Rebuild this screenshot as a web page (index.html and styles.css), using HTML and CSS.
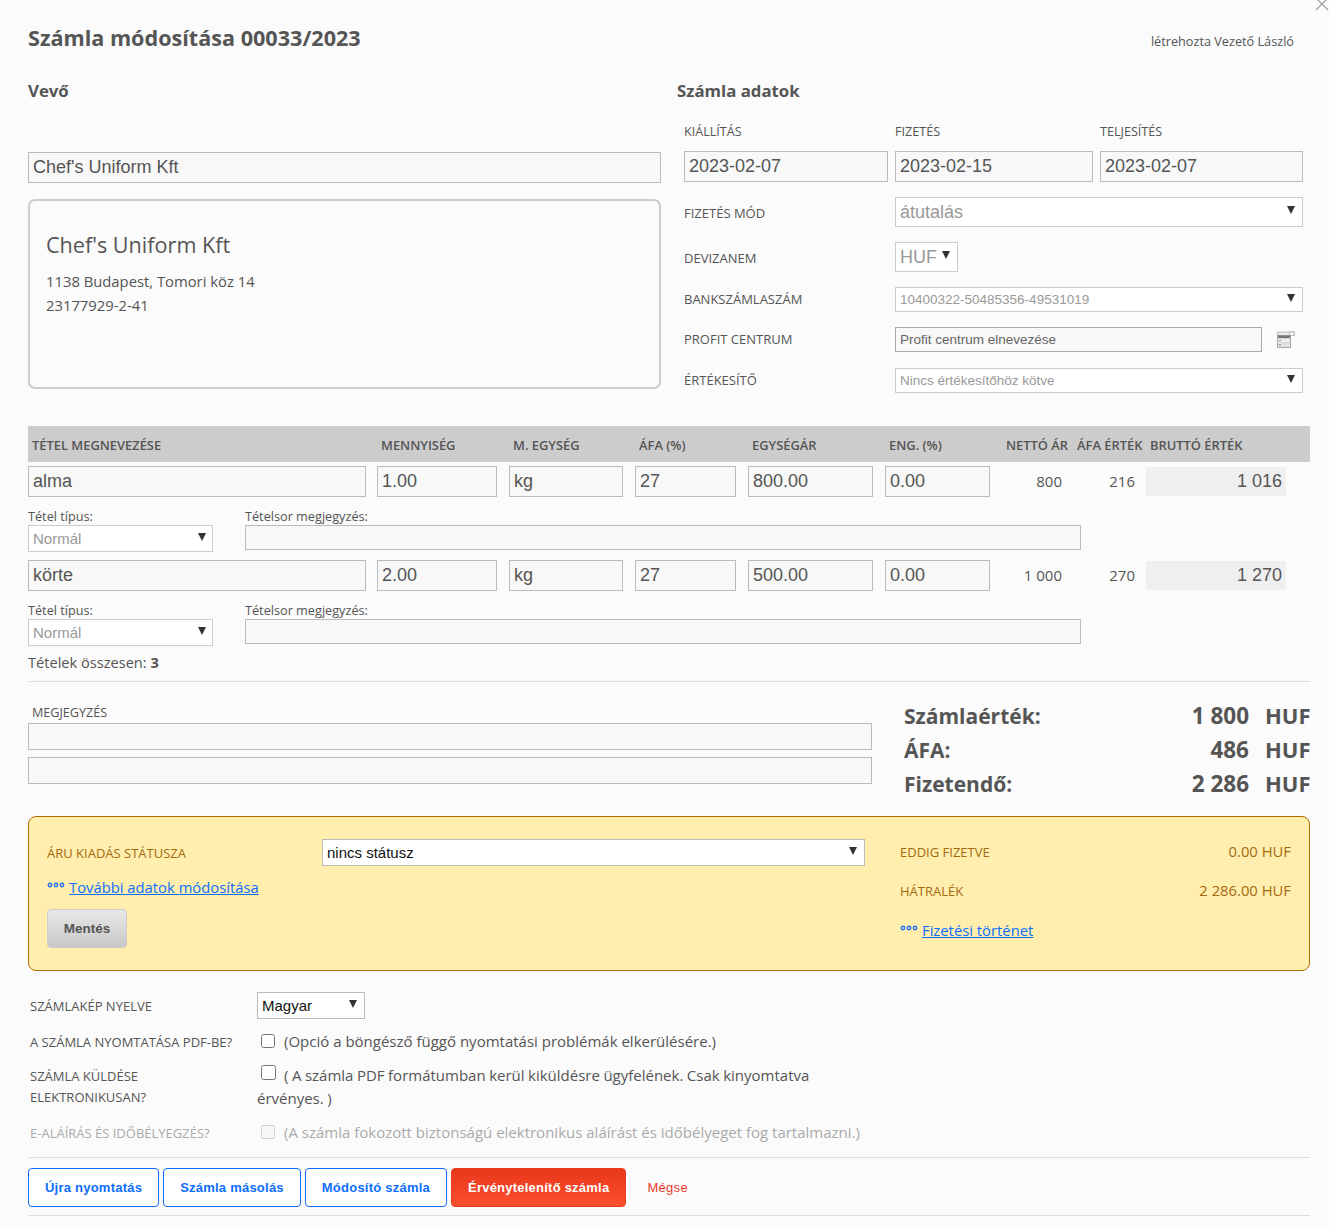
FILE: index.html
```html
<!DOCTYPE html>
<html lang="hu">
<head>
<meta charset="utf-8">
<title>Számla módosítása</title>
<link rel="stylesheet" href="styles.css">
</head>
<body>
<svg class="close" width="14" height="12" viewBox="0 0 14 12"><path d="M1 -2L13 10M13 -2L1 10" stroke="#9a9a9a" stroke-width="1.1" fill="none"/></svg>
<main class="page">
  <header class="head">
    <h1>Számla módosítása 00033/2023</h1>
    <span class="author">létrehozta Vezető László</span>
  </header>

  <section class="top">
    <div class="buyer">
      <h2>Vevő</h2>
      <input class="field name-input" readonly value="Chef's Uniform Kft">
      <div class="card">
        <div class="card-title">Chef's Uniform Kft</div>
        <div class="card-line">1138 Budapest, Tomori köz 14</div>
        <div class="card-line">23177929-2-41</div>
      </div>
    </div>
    <div class="details">
      <h2>Számla adatok</h2>
      <div class="dates">
        <label class="lbl date-lbl">KIÁLLÍTÁS</label><label class="lbl date-lbl">FIZETÉS</label><label class="lbl date-lbl">TELJESÍTÉS</label>
        <input class="field d1" readonly value="2023-02-07"><input class="field d2" readonly value="2023-02-15"><input class="field d3" readonly value="2023-02-07">
      </div>
      <div class="form-row r1"><label class="lbl">FIZETÉS MÓD</label><div class="sel big wide"><select disabled><option>átutalás</option></select></div></div>
      <div class="form-row r1"><label class="lbl">DEVIZANEM</label><div class="sel big cur"><select disabled><option>HUF</option></select></div></div>
      <div class="form-row r2"><label class="lbl">BANKSZÁMLASZÁM</label><div class="sel small wide"><select disabled><option>10400322-50485356-49531019</option></select></div></div>
      <div class="form-row r2"><label class="lbl">PROFIT CENTRUM</label><input class="field profit" readonly value="Profit centrum elnevezése">
        <svg class="pc-icon" width="18" height="18" viewBox="0 0 18 18"><rect x="0.5" y="1" width="17" height="3.5" fill="#e8e8e8" stroke="#bdbdbd"/><rect x="13" y="1" width="4" height="3.5" fill="#fff" stroke="#bdbdbd"/><rect x="0.5" y="4.5" width="13" height="12" fill="#d6d6d6" stroke="#aaa"/><rect x="1" y="4.5" width="12" height="2.5" fill="#777"/><rect x="1" y="8" width="12" height="3" fill="#eee"/><rect x="1" y="12" width="12" height="3.5" fill="#e2e2e2"/><rect x="2" y="9" width="2" height="1" fill="#888"/><rect x="2" y="13" width="2" height="1.5" fill="#999"/></svg>
      </div>
      <div class="form-row r2 last"><label class="lbl">ÉRTÉKESÍTŐ</label><div class="sel small wide"><select disabled><option>Nincs értékesítőhöz kötve</option></select></div></div>
    </div>
  </section>

  <section class="items">
    <div class="thead">
      <span class="p">TÉTEL MEGNEVEZÉSE</span><span class="p">MENNYISÉG</span><span class="p">M. EGYSÉG</span><span class="p">ÁFA (%)</span><span class="p">EGYSÉGÁR</span><span class="p">ENG. (%)</span><span>NETTÓ ÁR</span><span>ÁFA ÉRTÉK</span><span>BRUTTÓ ÉRTÉK</span>
    </div>

    <div class="item">
      <div class="item-row">
        <input class="field c1" readonly value="alma"><input class="field c2" readonly value="1.00"><input class="field c3" readonly value="kg"><input class="field c4" readonly value="27"><input class="field c5" readonly value="800.00"><input class="field c6" readonly value="0.00">
        <span class="num">800</span><span class="num">216</span><span class="gross">1 016</span>
      </div>
      <div class="sub-row">
        <div class="sub-type"><label class="sub-lbl">Tétel típus:</label><div class="sel type"><select disabled><option>Normál</option></select></div></div>
        <div class="sub-note"><label class="sub-lbl">Tételsor megjegyzés:</label><input class="field note" readonly></div>
      </div>
    </div>

    <div class="item">
      <div class="item-row">
        <input class="field c1" readonly value="körte"><input class="field c2" readonly value="2.00"><input class="field c3" readonly value="kg"><input class="field c4" readonly value="27"><input class="field c5" readonly value="500.00"><input class="field c6" readonly value="0.00">
        <span class="num">1 000</span><span class="num">270</span><span class="gross">1 270</span>
      </div>
      <div class="sub-row">
        <div class="sub-type"><label class="sub-lbl">Tétel típus:</label><div class="sel type"><select disabled><option>Normál</option></select></div></div>
        <div class="sub-note"><label class="sub-lbl">Tételsor megjegyzés:</label><input class="field note" readonly></div>
      </div>
    </div>

    <p class="count">Tételek összesen: <b>3</b></p>
  </section>

  <section class="summary">
    <div class="remarks">
      <label class="lbl rem-lbl">MEGJEGYZÉS</label>
      <input class="field rem" readonly>
      <input class="field rem second" readonly>
    </div>
    <div class="totals">
      <div class="total"><span class="t-name">Számlaérték:</span><span class="t-val">1 800</span><span class="t-cur">HUF</span></div>
      <div class="total"><span class="t-name">ÁFA:</span><span class="t-val">486</span><span class="t-cur">HUF</span></div>
      <div class="total"><span class="t-name">Fizetendő:</span><span class="t-val">2 286</span><span class="t-cur">HUF</span></div>
    </div>
  </section>

  <section class="status">
    <div class="status-left">
      <div class="status-row"><label class="lbl y">ÁRU KIADÁS STÁTUSZA</label><div class="sel status-sel"><select><option>nincs státusz</option></select></div></div>
      <div class="more"><svg class="dots" width="18" height="6" viewBox="0 0 18 6"><g fill="none" stroke="#1f6fff" stroke-width="1.4"><circle cx="3" cy="3" r="1.7"/><circle cx="9" cy="3" r="1.7"/><circle cx="15" cy="3" r="1.7"/></g></svg><a href="#">További adatok módosítása</a></div>
      <button class="save" type="button">Mentés</button>
    </div>
    <div class="status-right">
      <div class="pay-row"><label class="lbl y">EDDIG FIZETVE</label><span class="pay-val">0.00 HUF</span></div>
      <div class="pay-row gap"><label class="lbl y">HÁTRALÉK</label><span class="pay-val">2 286.00 HUF</span></div>
      <div class="more pay-link"><svg class="dots" width="18" height="6" viewBox="0 0 18 6"><g fill="none" stroke="#1f6fff" stroke-width="1.4"><circle cx="3" cy="3" r="1.7"/><circle cx="9" cy="3" r="1.7"/><circle cx="15" cy="3" r="1.7"/></g></svg><a href="#">Fizetési történet</a></div>
    </div>
  </section>

  <section class="options">
    <div class="opt o-lang"><label class="lbl">SZÁMLAKÉP NYELVE</label><div class="sel lang"><select><option>Magyar</option></select></div></div>
    <div class="opt o-a"><label class="lbl">A SZÁMLA NYOMTATÁSA PDF-BE?</label><div class="opt-text"><input type="checkbox">(Opció a böngésző függő nyomtatási problémák elkerülésére.)</div></div>
    <div class="opt o-b"><label class="lbl two">SZÁMLA KÜLDÉSE ELEKTRONIKUSAN?</label><div class="opt-text"><input type="checkbox">( A számla PDF formátumban kerül kiküldésre ügyfelének. Csak kinyomtatva<br>érvényes. )</div></div>
    <div class="opt o-a off"><label class="lbl">E-ALÁÍRÁS ÉS IDŐBÉLYEGZÉS?</label><div class="opt-text"><input type="checkbox" disabled>(A számla fokozott biztonságú elektronikus aláírást és időbélyeget fog tartalmazni.)</div></div>
  </section>

  <footer class="actions">
    <button class="btn" type="button">Újra nyomtatás</button>
    <button class="btn" type="button">Számla másolás</button>
    <button class="btn" type="button">Módosító számla</button>
    <button class="btn danger" type="button">Érvénytelenítő számla</button>
    <a class="cancel" href="#">Mégse</a>
  </footer>
</main>
</body>
</html>
```

FILE: styles.css
```css
* { box-sizing: border-box; }
html, body { margin: 0; background: #fbfbfb; }
body { color: #555; font-family: "Open Sans", "Noto Sans", sans-serif; font-size: 14px; position: relative; height: 1228px; overflow: hidden; }
.close { position: absolute; left: 1315px; top: 0; }
.page { width: 1310px; padding: 20px 0 0 28px; }

.head { display: flex; justify-content: space-between; align-items: center; height: 36px; }
h1 { margin: 0; font-size: 21.6px; line-height: 36px; font-weight: 700; color: #555; }
.author { font-size: 12.7px; color: #555; margin-right: 16px; padding-top: 5px; }

.top { display: grid; grid-template-columns: 633px 633px; column-gap: 16px; margin-top: 20px; height: 317px; }
h2 { margin: 0; font-size: 16.8px; line-height: 30px; font-weight: 700; color: #555; }
.lbl { font-size: 13px; line-height: 20px; color: #555; }
.date-lbl { font-size: 12.6px; height: 20px; padding-top: 1px; }

.field { display: block; height: 31px; width: 100%; border: 1px solid #bbb; background: #f8f8f8; color: #555; font-family: "Liberation Sans", Arial, sans-serif; font-size: 18px; padding: 0 4px; margin: 0; outline: none; border-radius: 0; }

.name-input { margin-top: 46px; }
.card { margin-top: 16px; height: 190px; border: 2px solid #ccc; border-radius: 7px; padding: 28px 16px 0; }
.card-title { font-size: 21.6px; line-height: 32px; margin-bottom: 8px; }
.card-line { font-size: 14.8px; line-height: 24px; }

.dates { display: grid; grid-template-columns: 211px 205px 203px; margin: 15px 0 0 7px; row-gap: 10px; }
.d1 { width: 204px; }
.d2 { width: 198px; }
.d3 { width: 203px; }
.form-row { display: flex; align-items: center; margin: 15px 0 0 7px; }
.form-row .lbl { width: 211px; flex: none; }
.r1 { height: 30px; }
.r1 .lbl { padding-top: 2px; }
.r2 { height: 25px; }
.r2 .lbl { padding-bottom: 1px; }
.form-row.last { margin-top: 16px; }

.sel { position: relative; height: 100%; }
.sel::after { content: ""; position: absolute; right: 8px; top: 50%; margin-top: -6px; border-left: 4px solid transparent; border-right: 4px solid transparent; border-top: 8px solid #333; pointer-events: none; }
.sel select { display: block; appearance: none; -webkit-appearance: none; width: 100%; height: 100%; border: 1px solid #ccc; background: #fff; color: #999; font-family: "Liberation Sans", Arial, sans-serif; padding: 0 4px; margin: 0; border-radius: 0; opacity: 1; outline: none; }
.big select { font-size: 18px; }
.small select { font-size: 13.5px; }
.wide { width: 408px; }
.cur { width: 63px; }
.profit { width: 367px; height: 25px; font-size: 13.5px; border-color: #aaa; color: #666; }
.pc-icon { margin-left: 15px; flex: none; }

.items { margin-top: 33px; }
.thead { display: grid; grid-template-columns: 349px 132px 126px 113px 137px 121px 71px 73px 160px; height: 36px; align-items: center; background: #ccc; padding-top: 2px; }
.thead span { font-size: 12.9px; font-weight: 600; color: #555; white-space: nowrap; }
.thead .p { padding-left: 4px; }

.item { margin-top: 4px; }
.item + .item { margin-top: 8px; }
.item-row { display: grid; grid-template-columns: 349px 132px 126px 113px 137px 105px 72px 73px 151px; height: 31px; align-items: center; }
.c1 { width: 338px; }
.c2 { width: 120px; }
.c3 { width: 114px; }
.c4 { width: 101px; }
.c5 { width: 125px; }
.c6 { width: 105px; }
.num { text-align: right; font-size: 15px; line-height: 28px; height: 30px; }
.gross { margin-left: 11px; height: 29px; background: #efefef; text-align: right; font-family: "Liberation Sans", Arial, sans-serif; font-size: 18px; line-height: 29px; padding-right: 4px; }

.sub-row { display: flex; margin-top: 10px; }
.sub-type { width: 217px; }
.sub-note { width: 836px; }
.sub-lbl { display: block; font-size: 12.7px; line-height: 18px; height: 18px; color: #555; }
.type { width: 185px; height: 27px; }
.type::after { right: 7px; }
.type select { font-size: 15px; }
.note { height: 25px; }

.count { margin: 6px 0 0; font-size: 14.6px; line-height: 20px; height: 20px; }
.count b { font-weight: 700; }

.summary { display: flex; margin-top: 9px; border-top: 1px solid #ddd; height: 120px; }
.remarks { width: 844px; padding-top: 21px; }
.rem-lbl { display: block; font-size: 12.6px; padding-left: 4px; height: 20px; }
.rem { height: 27px; }
.second { margin-top: 7px; }
.totals { margin-left: 32px; width: 406px; padding-top: 16px; }
.total { display: flex; height: 34px; align-items: baseline; font-size: 21px; line-height: 34px; font-weight: 700; color: #555; }
.t-name { flex: 1; }
.t-val { margin-right: 16px; font-size: 22.5px; }
.t-cur { width: 45px; text-align: right; font-size: 22px; }

.status { display: flex; margin-top: 15px; height: 155px; background: #ffeeae; border: 1px solid #b06f00; border-radius: 8px; padding: 22px 18px 0 18px; color: #a56a10; }
.status-left { width: 818px; }
.status-right { width: 391px; margin-left: 35px; }
.status-row { display: flex; height: 27px; align-items: center; }
.lbl.y { color: #a56a10; }
.status-row .lbl { width: 275px; flex: none; }
.status-sel { width: 543px; height: 27px; }
.status-sel select { color: #111; font-size: 15px; border-color: #bbb; }
.more { display: flex; align-items: center; height: 22px; margin-top: 10px; font-size: 14.8px; }
.more a { color: #0d6efd; }
.dots { margin-right: 4px; margin-top: -4px; flex: none; }
.save { display: block; width: 80px; height: 39px; margin-top: 11px; border: 1px solid #ccc; border-radius: 4px; background: linear-gradient(#e8e8e8, #c8c8c8); color: #555; font-family: "Liberation Sans", Arial, sans-serif; font-size: 13.5px; font-weight: 700; padding: 0; }
.pay-row { display: flex; justify-content: space-between; align-items: center; height: 26px; }
.pay-row.gap { margin-top: 13px; }
.pay-val { font-size: 14.8px; line-height: 22px; height: 24px; }
.pay-link { margin-top: 15px; }

.options { margin-top: 21px; }
.opt { display: flex; }
.opt .lbl { width: 229px; padding: 1px 0 0 2px; flex: none; }
.o-lang { height: 27px; align-items: center; }
.lang { width: 108px; height: 27px; }
.lang select { color: #111; font-size: 15px; border-color: #bbb; }
.o-a { height: 22px; margin-top: 11px; align-items: center; }
.o-a .lbl { padding-top: 2px; }
.o-b { margin-top: 12px; height: 46px; }
.opt .two { line-height: 21px; padding: 2px 30px 0 2px; }
.opt-text { font-size: 15px; line-height: 23px; white-space: nowrap; }
.opt-text input { width: 14px; height: 14px; margin: 0 9px 0 4px; vertical-align: -1px; }
.o-b .opt-text { word-spacing: -.4px; }
.o-b .opt-text input { width: 15px; height: 15px; vertical-align: 1px; margin-right: 8px; }
.off .lbl, .off .opt-text { color: #aaa; }

.actions { display: flex; align-items: center; width: 1282px; margin-top: 14px; padding: 10px 0 8px; height: 59px; border-top: 1px solid #ddd; border-bottom: 1px solid #ddd; }
.btn { height: 39px; margin-right: 4px; padding: 0 16px; border: 1px solid #0d6efd; border-radius: 4px; background: #fff; color: #0d6efd; font-family: "Liberation Sans", Arial, sans-serif; font-size: 13px; font-weight: 700; letter-spacing: .23px; white-space: nowrap; }
.danger { border-color: #ee3b1e; background: linear-gradient(#e9371a, #fa5030); color: #fff; }
.cancel { margin-left: 17px; color: #e83a2b; font-family: "Liberation Sans", Arial, sans-serif; font-size: 13px; letter-spacing: .3px; text-decoration: none; }
```
